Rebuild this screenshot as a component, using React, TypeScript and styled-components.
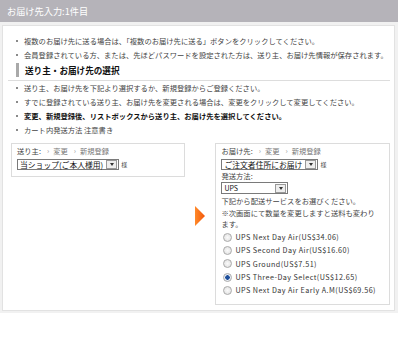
import styled, { createGlobalStyle } from 'styled-components';

const Global = createGlobalStyle`
  body {
    margin: 0;
    background: #fff;
    font-family: "Noto Sans CJK JP", "Noto Sans", sans-serif;
    color: #444;
  }
`;

const Page = styled.div`
  width: 400px;
`;

const Header = styled.div`
  height: 22px;
  width: 398px;
  background: #b5b3b9;
  color: #fff;
  font-size: 9.2px;
  line-height: 22px;
  padding-left: 7px;
  box-sizing: border-box;
`;

const Frame = styled.div`
  width: 398px;
  box-sizing: border-box;
  background: #f1f1f1;
  padding: 3px 3px 2px 2px;
`;

const Panel = styled.div`
  background: #fff;
  border: 1px solid #e2e2e2;
  padding: 8px 4px 5px 5px;
`;

const Bullets = styled.ul`
  list-style: none;
  margin: 0;
  padding: 0 0 0 7px;
  font-size: 7.3px;
  line-height: 14px;
`;

const Bullet = styled.li<{ $bold?: boolean }>`
  display: flex;
  align-items: center;
  white-space: nowrap;
  color: ${p => (p.$bold ? '#111' : '#444')};
  font-weight: ${p => (p.$bold ? 700 : 400)};
  &::before {
    content: '';
    width: 2px;
    height: 2px;
    margin: 0 6px 0 1px;
    background: #8a8a8a;
  }
`;

const SectionTitle = styled.div`
  margin-top: 1px;
  padding: 0 0 3px 8px;
  border-bottom: 1px solid #ddd;
  display: flex;
  align-items: center;
  gap: 6px;
  font-size: 8.6px;
  font-weight: 700;
  color: #111;
  &::before {
    content: '';
    width: 3px;
    height: 14px;
    background: #a9a9a9;
  }
`;

const Boxes = styled.div`
  display: flex;
  align-items: flex-start;
  margin-top: 6px;
  padding-left: 3px;
`;

const Box = styled.div<{ $w: number; $pb: number }>`
  width: ${p => p.$w}px;
  box-sizing: border-box;
  border: 1px solid #dcdcdc;
  padding: 1px 5px ${p => p.$pb}px 5px;
  font-size: 7.3px;
  color: #444;
`;

const ArrowCol = styled.div`
  width: 31px;
  display: flex;
  justify-content: center;
  padding-top: 63px;
`;

const LabelRow = styled.div`
  height: 12px;
  line-height: 12px;
  display: flex;
  align-items: center;
  gap: 4px;
  white-space: nowrap;
`;

const Link = styled.span`
  color: #777;
  &::before {
    content: '›';
    color: #999;
    margin: 0 4px 0 2px;
  }
`;

const SelectRow = styled.div`
  display: flex;
  align-items: center;
  margin-top: 2px;
  white-space: nowrap;
  font-size: 7px;
`;

const FakeSelect = styled.div<{ $w?: number }>`
  display: flex;
  align-items: center;
  justify-content: space-between;
  height: ${p => (p.$w ? 12 : 11)}px;
  ${p => (p.$w ? `width: ${p.$w}px;` : '')}
  box-sizing: border-box;
  border: 1px solid #7a7a7a;
  background: #fff;
  color: #111;
  font-size: ${p => (p.$w ? 7 : 7.8)}px;
  padding-left: 2px;
  line-height: 9px;
`;

const SelectBtn = styled.span`
  width: 9px;
  height: 7px;
  margin: 0 1px 0 3px;
  border: 1px solid #999;
  background: #eee;
  display: flex;
  align-items: center;
  justify-content: center;
  &::after {
    content: '';
    border-left: 2px solid transparent;
    border-right: 2px solid transparent;
    border-top: 3px solid #333;
  }
`;

const Sama = styled.span`
  margin-left: 2px;
  font-size: 6px;
`;

const Text = styled.div<{ $h?: number }>`
  line-height: ${p => p.$h ?? 11.5}px;
`;

const RadioRow = styled.label`
  display: flex;
  align-items: center;
  height: 13.3px;
  gap: 3px;
  padding-left: 2px;
  white-space: nowrap;
  color: #333;
  font-size: 7.2px;
  letter-spacing: 0.45px;
`;

const Radio = styled.span<{ $on?: boolean }>`
  width: 7px;
  height: 7px;
  border-radius: 50%;
  border: 1px solid #aaa;
  background: radial-gradient(circle, ${p => (p.$on ? '#1e4f9a 0 2px, #e8eef6 2.5px' : '#fafafa 0, #ddd 100%')});
`;

const services = [
  'UPS Next Day Air(US$34.06)',
  'UPS Second Day Air(US$16.60)',
  'UPS Ground(US$7.51)',
  'UPS Three-Day Select(US$12.65)',
  'UPS Next Day Air Early A.M(US$69.56)',
];

export default function App() {
  return (
    <Page>
      <Global />
      <Header>お届け先入力:1件目</Header>
      <Frame>
        <Panel>
          <Bullets>
            <Bullet>複数のお届け先に送る場合は、「複数のお届け先に送る」ボタンをクリックしてください。</Bullet>
            <Bullet>会員登録されている方、または、先ほどパスワードを設定された方は、送り主、お届け先情報が保存されます。</Bullet>
          </Bullets>
          <SectionTitle>送り主・お届け先の選択</SectionTitle>
          <Bullets>
            <Bullet>送り主、お届け先を下記より選択するか、新規登録からご登録ください。</Bullet>
            <Bullet>すでに登録されている送り主、お届け先を変更される場合は、変更をクリックして変更してください。</Bullet>
            <Bullet $bold>変更、新規登録後、リストボックスから送り主、お届け先を選択してください。</Bullet>
            <Bullet>カート内発送方法 注意書き</Bullet>
          </Bullets>
          <Boxes>
            <Box $w={174} $pb={6}>
              <LabelRow>
                送り主:<Link>変更</Link><Link>新規登録</Link>
              </LabelRow>
              <SelectRow>
                <FakeSelect>
                  当ショップ(ご本人様用)
                  <SelectBtn />
                </FakeSelect>
                <Sama>様</Sama>
              </SelectRow>
            </Box>
            <ArrowCol>
              <svg width="10" height="20" viewBox="0 0 10 20">
                <defs>
                  <linearGradient id="ar" x1="0" y1="0" x2="1" y2="0">
                    <stop offset="0" stopColor="#ff8a2a" />
                    <stop offset="1" stopColor="#f2560a" />
                  </linearGradient>
                </defs>
                <polygon points="0,0 10,10 0,20" fill="url(#ar)" />
              </svg>
            </ArrowCol>
            <Box $w={175} $pb={7}>
              <LabelRow>
                お届け先:<Link>変更</Link><Link>新規登録</Link>
              </LabelRow>
              <SelectRow>
                <FakeSelect>
                  ご注文者住所にお届け
                  <SelectBtn />
                </FakeSelect>
                <Sama>様</Sama>
              </SelectRow>
              <Text $h={12}>発送方法:</Text>
              <SelectRow style={{ marginTop: 0 }}>
                <FakeSelect $w={67}>
                  UPS
                  <SelectBtn />
                </FakeSelect>
              </SelectRow>
              <Text style={{ marginTop: 2 }}>下記から配送サービスをお選びください。</Text>
              <Text>※次画面にて数量を変更しますと送料も変わり</Text>
              <Text>ます。</Text>
              <div>
                {services.map((s, i) => (
                  <RadioRow key={s}>
                    <Radio $on={i === 3} />
                    {s}
                  </RadioRow>
                ))}
              </div>
            </Box>
          </Boxes>
        </Panel>
      </Frame>
    </Page>
  );
}
